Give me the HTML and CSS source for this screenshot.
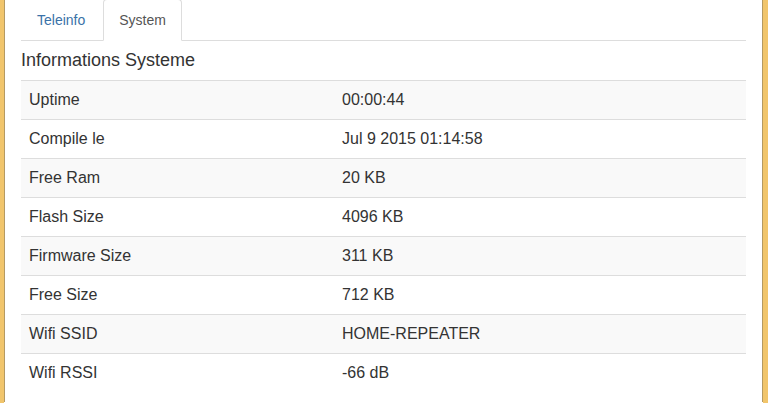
FILE: index.html
```html
<!DOCTYPE html>
<html lang="fr">
<head>
	<meta charset="UTF-8">
	<title>Teleinfo - System</title>
	<link rel="stylesheet" href="styles.css">
</head>
<body>
	<div class="frame">
		<div class="page">
			<ul class="tabs">
				<li><a href="#tab_tinfo">Teleinfo</a></li>
				<li class="active"><a href="#tab_sys">System</a></li>
			</ul>
			<h4 class="title">Informations Systeme</h4>
			<table class="info">
				<tr><td>Uptime</td><td>00:00:44</td></tr>
				<tr><td>Compile le</td><td>Jul 9 2015 01:14:58</td></tr>
				<tr><td>Free Ram</td><td>20 KB</td></tr>
				<tr><td>Flash Size</td><td>4096 KB</td></tr>
				<tr><td>Firmware Size</td><td>311 KB</td></tr>
				<tr><td>Free Size</td><td>712 KB</td></tr>
				<tr><td>Wifi SSID</td><td>HOME-REPEATER</td></tr>
				<tr><td>Wifi RSSI</td><td>-66 dB</td></tr>
			</table>
		</div>
	</div>
</body>
</html>
```

FILE: styles.css
```css
html,body{margin: 0;padding: 0;background: #fff;}
body{font-family: "Liberation Sans", Arial, sans-serif;color: #333;font-size: 16px;}
.frame{height: 403px;border-left: 4px solid #f1c56c;border-right: 5px solid #f1c56c;box-sizing: border-box;overflow: hidden;}
.page{height: 100%;border-left: 1px solid #b59a62;border-right: 1px solid #b59a62;padding: 0 16px;box-sizing: border-box;}

.tabs{list-style: none;margin: -1px 0 0;padding: 0;display: flex;border-bottom: 1px solid #ddd;}
.tabs li{margin-bottom: -1px;}
.tabs a{display: block;margin-right: 2px;padding: 10px 15px;line-height: 20px;font-size: 14px;
	color: #3a72a8;text-decoration: none;border: 1px solid transparent;border-radius: 4px 4px 0 0;}
.tabs .active a{color: #555;background: #fff;border-color: #ddd #ddd transparent;}

.title{margin: 9px 0 10px;font-size: 18px;font-weight: normal;line-height: 20px;}

.info{width: 100%;border-collapse: collapse;table-layout: fixed;}
.info td{padding: 8px;line-height: 22px;border-top: 1px solid #ddd;vertical-align: top;}
.info td:first-child{width: 297px;}
.info tr:nth-child(odd) td{background: #f9f9f9;}
```
